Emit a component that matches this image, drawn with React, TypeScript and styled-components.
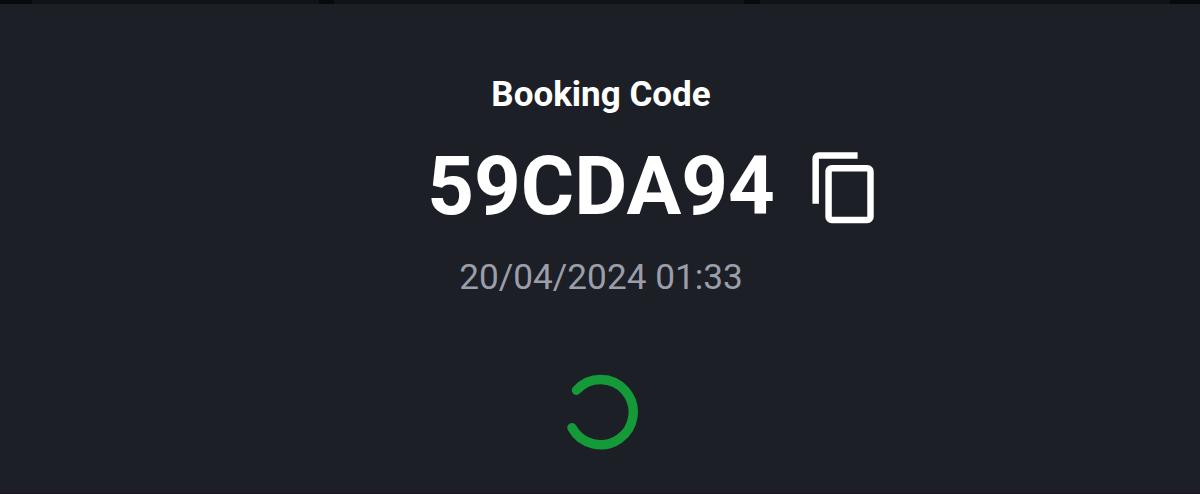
import React from 'react'
import styled, { createGlobalStyle } from 'styled-components'

const GlobalStyle = createGlobalStyle`
  body {
    margin: 0;
    background: #1c1f26;
    font-family: Roboto, 'Liberation Sans', sans-serif;
  }
`
const Screen = styled.div`
  height: 494px;
  display: flex;
  flex-direction: column;
  overflow: hidden;
  background: #1c1f26;
`
const TopEdge = styled.div`
  flex-shrink: 0;
  height: 4px;
  display: flex;
  background: #08090b;
`
const EdgeTab = styled.div<{ $gap: number, $width: number }>`
  width: ${props => props.$width}px;
  margin-left: ${props => props.$gap}px;
  background: #121318;
`
const Content = styled.main`
  flex-grow: 1;
  display: flex;
  flex-direction: column;
  align-items: center;
  padding-top: 70px;
  padding-left: 2px;
`
const Title = styled.h1`
  margin: 0;
  color: #ffffff;
  font-size: 35px;
  font-weight: 700;
  line-height: 42px;
`
const CodeRow = styled.div`
  width: 100%;
  margin-top: 22px;
  display: grid;
  grid-template-columns: 1fr auto 1fr;
  align-items: center;
`
const Code = styled.div`
  grid-column: 2;
  color: #ffffff;
  font-size: 81.6px;
  font-weight: 700;
  line-height: 96px;
`
const CopyButton = styled.button`
  justify-self: start;
  width: 77.4px;
  height: 77.4px;
  margin-left: 31px;
  margin-top: 4px;
  padding: 0;
  border: 0;
  background: none;
  color: #ffffff;
  cursor: pointer;
  svg {
    display: block;
    width: 100%;
    height: 100%;
  }
`
const DateText = styled.p`
  margin: 22px 0 0;
  color: #9b9ea9;
  font-size: 35.2px;
  line-height: 42px;
`
const Spinner = styled.svg`
  width: 80px;
  height: 80px;
  margin-top: 74px;
  color: #149a38;
`
const BottomEdge = styled.div`
  flex-shrink: 0;
  height: 1px;
  background: #1a151f;
`

const tabs = [
  { gap: 32, width: 287 },
  { gap: 15, width: 410 },
  { gap: 16, width: 410 }
]

function IconCopy () {
  return <svg viewBox="0 0 24 24" fill="currentColor">
    <path d="M16 1H4c-1.1 0-2 .9-2 2v14h2V3h12V1zm3 4H8c-1.1 0-2 .9-2 2v14c0 1.1.9 2 2 2h11c1.1 0 2-.9 2-2V7c0-1.1-.9-2-2-2zm0 16H8V7h11v14z" />
  </svg>
}

function App () {
  return <Screen>
    <GlobalStyle />
    <TopEdge>
      {tabs.map((tab, i) => <EdgeTab key={i} $gap={tab.gap} $width={tab.width} />)}
    </TopEdge>
    <Content>
      <Title>Booking Code</Title>
      <CodeRow>
        <Code>59CDA94</Code>
        <CopyButton aria-label="Copy booking code">
          <IconCopy />
        </CopyButton>
      </CodeRow>
      <DateText>20/04/2024 01:33</DateText>
      <Spinner viewBox="0 0 80 80" fill="none">
        <path
          d="M15.5 18.2A32.6 32.6 0 1 1 11 55.7"
          stroke="currentColor"
          strokeWidth="9.4"
          strokeLinecap="round" />
      </Spinner>
    </Content>
    <BottomEdge />
  </Screen>
}

export default App
